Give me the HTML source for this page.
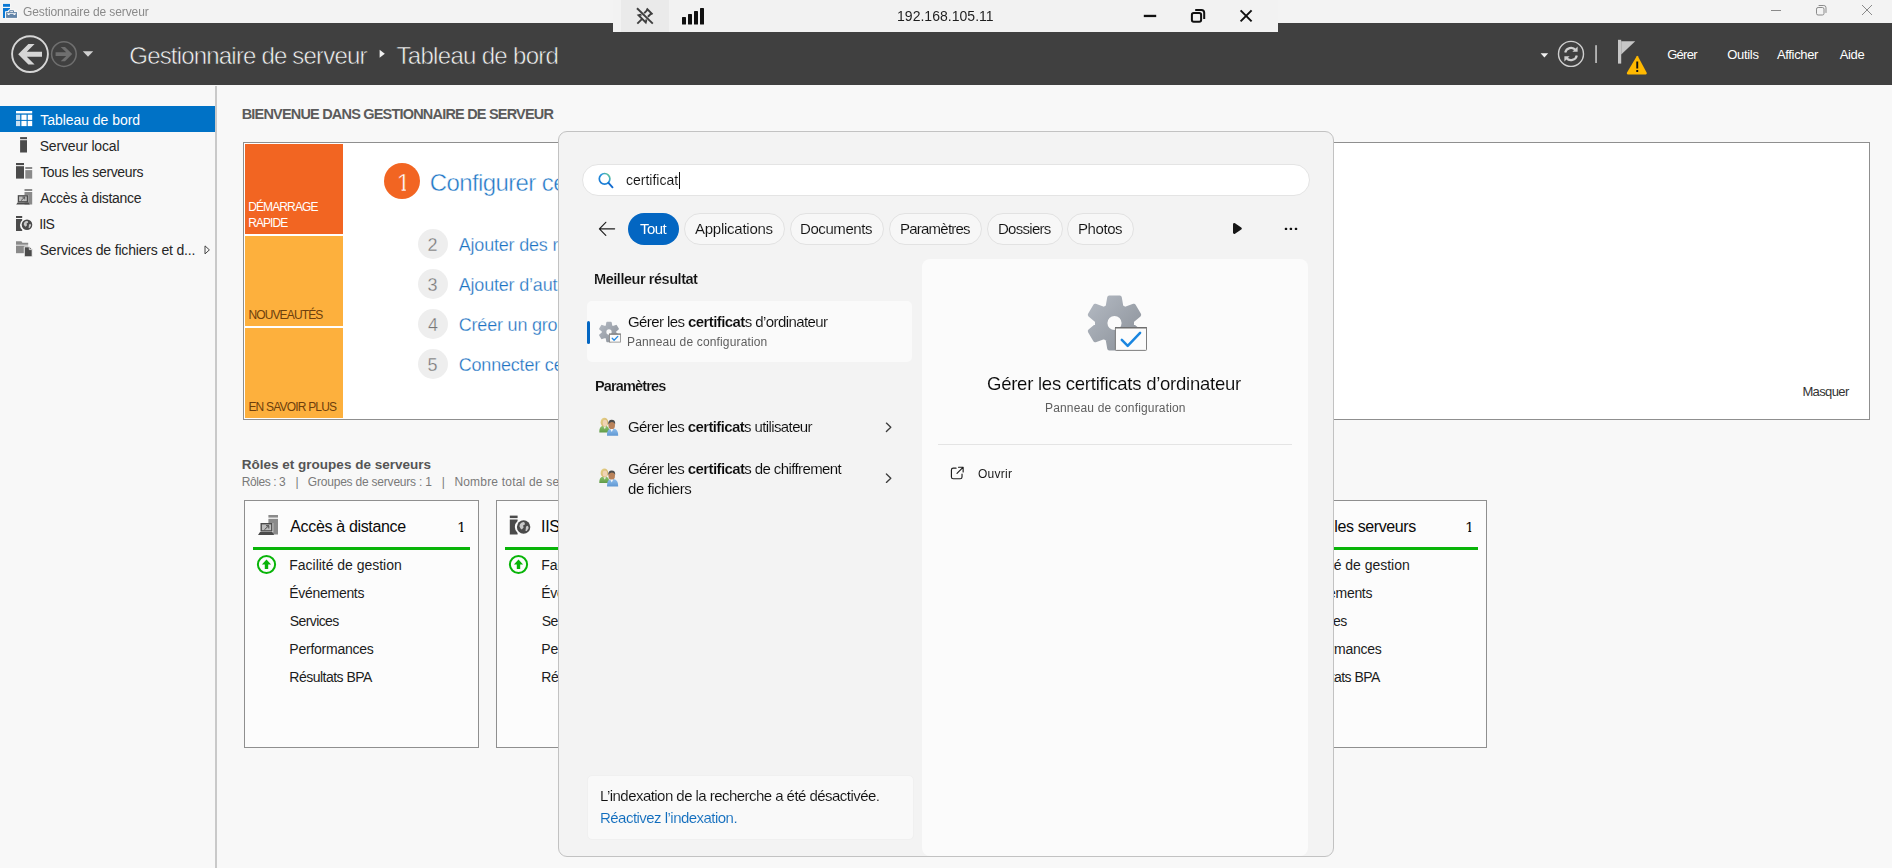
<!DOCTYPE html>
<html lang="fr"><head><meta charset="utf-8"><title>Gestionnaire de serveur</title>
<style>
html,body{margin:0;padding:0;}
body{width:1892px;height:868px;position:relative;overflow:hidden;background:#f8f8f8;font-family:"Liberation Sans",sans-serif;}
.a{position:absolute;}
.t{position:absolute;white-space:nowrap;}
.t b{font-weight:700;-webkit-text-stroke:0.14px #f6f6f6;}
svg{position:absolute;overflow:visible;}
#titlebar{left:0;top:0;width:1892px;height:23px;background:#f3f3f3;}
#header{left:0;top:23px;width:1892px;height:62px;background:#404040;}
#sidebar{left:0;top:85px;width:216px;height:783px;background:#f8f8f8;}
#sideborder{left:215.3px;top:86px;width:1.7px;height:782px;background:#c9c9c9;}
#sel{left:0;top:106px;width:215px;height:26px;background:#0072c6;}
#welcome{left:243px;top:142px;width:1625px;height:276px;background:#fff;border:1px solid #8f8f8f;}
.tile{left:245px;width:98px;height:90px;}
.circ{border-radius:50%;}
.card{top:500px;width:233px;height:246px;background:#fcfcfc;border:1px solid #8f8f8f;}
.gbar{top:547px;width:217px;height:3px;background:#08b408;}
#clipmain{left:217px;top:85px;width:1675px;height:783px;overflow:hidden;}
#rdp{left:613px;top:0;width:665px;height:32px;background:#f2f2f2;z-index:25;}
#panel{left:558px;top:131px;width:774px;height:724px;background:#f3f3f3;border:1px solid #c2c2c2;border-radius:9px;z-index:10;}
.pill{top:213px;height:30px;border:1px solid #e2e2e2;border-radius:16px;background:#f7f7f7;z-index:11;}
.z11{z-index:11;}
</style></head><body>
<div class="a" id="titlebar"></div>
<div class="a" id="header"></div>
<div class="a" id="sidebar"></div>
<div class="a" id="sideborder"></div>
<div class="a" id="sel"></div>

<!-- welcome -->
<div class="a" id="welcome"></div>
<div class="a tile" style="top:144px;background:#f26522"></div>
<div class="a tile" style="top:236px;background:#fdb03d"></div>
<div class="a tile" style="top:328px;background:#fdb03d"></div>
<div class="a circ" style="left:384px;top:163px;width:36px;height:36px;background:#f26522"></div>
<div class="a circ" style="left:418px;top:229px;width:30px;height:30px;background:#eeeeee"></div>
<div class="a circ" style="left:418px;top:269px;width:30px;height:30px;background:#eeeeee"></div>
<div class="a circ" style="left:418px;top:309px;width:30px;height:30px;background:#eeeeee"></div>
<div class="a circ" style="left:418px;top:349px;width:30px;height:30px;background:#eeeeee"></div>

<!-- cards -->
<div class="a card" style="left:244px"></div><div class="a gbar" style="left:253px"></div>
<div class="a card" style="left:496px"></div><div class="a gbar" style="left:505px"></div>
<div class="a card" style="left:748px"></div><div class="a gbar" style="left:757px"></div>
<div class="a card" style="left:1000px"></div><div class="a gbar" style="left:1009px"></div>
<div class="a card" style="left:1252px"></div><div class="a gbar" style="left:1261px"></div>

<!-- title bar icon -->
<svg style="left:0;top:0" width="24" height="23" viewBox="0 0 24 23">
 <rect x="2.4" y="3.3" width="8.2" height="4.2" fill="#fbfbfb"/>
 <rect x="3" y="3.9" width="7" height="2.9" fill="#0a78d4"/>
 <path d="M3 8.1h7v1.1l-3.4 2.5h-1.5v6.4h-2.1z" fill="#0a78d4"/>
 <path d="M5.2 11.2h3.2v-.7q0-1 1-1h4.2q1 0 1 1v.7h3.3v7.5H5.2z" fill="#fbfbfb"/>
 <rect x="6.1" y="12.1" width="10.9" height="5.8" fill="#6485a8"/>
 <path d="M9.7 12.2v-1.5h3.8v1.5" fill="none" stroke="#6485a8" stroke-width="1"/>
 <path d="M6.9 13.3h9.3l-1.2 1.6h-1.2l-.6-.9h-3.3l-.6.9h-1.2z" fill="#fbfbfb"/>
</svg>
<!-- title bar window controls -->
<svg style="left:1760px;top:0" width="132" height="23" viewBox="1760 0 132 23" fill="none" stroke="#8a8a8a" stroke-width="1">
 <path d="M1771 10.5h10"/>
 <rect x="1816.5" y="7.5" width="7.5" height="7.5" rx="1.6"/>
 <path d="M1818.6 5.5h5.2q2.2 0 2.2 2.2v5.2"/>
 <path d="M1862 5l10 10M1872 5l-10 10"/>
</svg>
<!-- header nav buttons -->
<svg style="left:0;top:23px" width="110" height="62" viewBox="0 23 110 62" fill="none">
 <circle cx="30" cy="54.1" r="17.9" stroke="#d6d6d6" stroke-width="1.9"/>
 <path d="M18.2 54.2l10.2-10.2h6.2l-7.8 7.7h15.2v5h-15.2l7.8 7.7h-6.2z" fill="#d6d6d6"/>
 <circle cx="63.9" cy="54.1" r="12.3" stroke="#6f6f6f" stroke-width="1.5"/>
 <path d="M72.2 54.1l-7.2-7.2h-4.3l5.5 5.4h-10.6v3.6h10.6l-5.5 5.4h4.3z" fill="#6f6f6f"/>
 <path d="M82.8 51.2h10.4l-5.2 5.6z" fill="#d0d0d0"/>
</svg>
<!-- breadcrumb triangle -->
<svg style="left:379px;top:49px" width="8" height="10" viewBox="0 0 8 10"><path d="M.6.8l5.2 4-5.2 4z" fill="#f0f0f0"/></svg>
<!-- header right icons -->
<svg style="left:1530px;top:23px" width="130" height="62" viewBox="1530 23 130 62" fill="none">
 <path d="M1540.6 53.2h7.6l-3.8 4.3z" fill="#f0f0f0"/>
 <circle cx="1571" cy="53.9" r="12.5" stroke="#cfcfcf" stroke-width="1.4"/>
 <path d="M1565.2 52.6a6 6 0 0 1 10.4-2.6" stroke="#cfcfcf" stroke-width="2.2"/>
 <path d="M1577.6 46.6v5.2h-5.2z" fill="#cfcfcf"/>
 <path d="M1576.8 55.4a6 6 0 0 1-10.4 2.6" stroke="#cfcfcf" stroke-width="2.2"/>
 <path d="M1564.4 61.4v-5.2h5.2z" fill="#cfcfcf"/>
 <rect x="1595.3" y="45.2" width="1.5" height="17.8" fill="#cfcfcf"/>
 <rect x="1618" y="39.8" width="3.2" height="23.8" fill="#c6c6c6"/>
 <path d="M1621.2 41.2h14l-14 13.4z" fill="#c6c6c6"/>
 <path d="M1636.7 56.2q.6-.9 1.2 0l8.8 16.6q.5 1.6-1 1.6h-17.8q-1.5 0-1-1.6z" fill="#ffb900"/>
 <rect x="1636.3" y="61.5" width="1.9" height="7" fill="#111"/>
 <rect x="1636.3" y="70" width="1.9" height="2" fill="#111"/>
</svg>
<!-- sidebar icons -->
<svg style="left:0;top:100px" width="216" height="170" viewBox="0 100 216 170">
 <!-- dashboard -->
 <rect x="16" y="111" width="16.2" height="2.4" fill="#fff"/>
 <rect x="16" y="114.7" width="4.2" height="5.2" fill="#c9e1f3"/><rect x="21.4" y="114.7" width="5.2" height="5.2" fill="#fff"/><rect x="27.7" y="114.7" width="4.5" height="5.2" fill="#fff"/>
 <rect x="16" y="120.9" width="4.2" height="5.2" fill="#c9e1f3"/><rect x="21.4" y="120.9" width="5.2" height="5.2" fill="#fff"/><rect x="27.7" y="120.9" width="4.5" height="5.2" fill="#fff"/>
 <!-- local server -->
 <rect x="20.1" y="137.1" width="6.9" height="2.1" fill="#4b4b4b"/><rect x="20.1" y="140.2" width="6.9" height="12.3" fill="#4b4b4b"/>
 <!-- all servers -->
 <rect x="16" y="163" width="8" height="2.1" fill="#4b4b4b"/><rect x="16" y="166.2" width="8" height="12.4" fill="#4b4b4b"/>
 <rect x="25.3" y="167" width="6.9" height="2" fill="#8a8a8a"/><rect x="25.3" y="170.1" width="6.9" height="8.5" fill="#8a8a8a"/>
 <!-- remote access -->
 <rect x="24.5" y="189" width="7.7" height="2" fill="#8a8a8a"/><rect x="24.5" y="192" width="7.7" height="12.5" fill="#8a8a8a"/>
 <rect x="17.6" y="195" width="10.6" height="7.4" fill="#f8f8f8"/>
 <rect x="18.4" y="195.8" width="9" height="6" fill="#bdbdbd" stroke="#4b4b4b" stroke-width="1.3"/>
 <path d="M21 200.6l3.6-3.4M22.4 197.1h2.3v2.3" stroke="#4b4b4b" stroke-width=".9" fill="none"/>
 <path d="M16.2 204.5l1.4-2h10.8l1.4 2z" fill="#4b4b4b"/>
 <!-- IIS -->
 <rect x="16" y="216" width="6.2" height="2" fill="#4b4b4b"/><path d="M16 219h6.2v1.2a6.3 6.3 0 0 0 0 9.6v1.2H16z" fill="#4b4b4b"/>
 <circle cx="27" cy="224.8" r="5.3" fill="#4b4b4b"/>
 <path d="M24.2 222.4q1.6-1.8 3.4-1.4l.6 1.6-1.6 1 .4 1.6-1.4 1.6-1-.8-.9-1.8zM29 224.4l1.5-.6.6 1.8-1.5 2.4-1 .1z" fill="#c8c8c8"/>
 <!-- file services -->
 <path d="M16 241.3h5.4l1 1.5h5.8v2H16z" fill="#8a8a8a"/><rect x="16" y="245.6" width="12.2" height="7.6" fill="#8a8a8a"/>
 <path d="M24.3 246.8h5.2l2.7 2.6v7.4h-7.9z" fill="#4b4b4b" stroke="#f8f8f8" stroke-width=".9"/>
 <path d="M29.3 247.2v2.4h2.5" fill="none" stroke="#f8f8f8" stroke-width=".8"/>
 <!-- expander -->
 <path d="M205 245.9l4.4 4-4.4 4z" fill="none" stroke="#444" stroke-width="1"/>
</svg>
<!-- card icons -->
<svg style="left:244px;top:500px" width="1250" height="80" viewBox="244 500 1250 80">
 <!-- remote access 20px -->
 <rect x="268.4" y="515" width="9.6" height="2.6" fill="#8a8a8a"/><rect x="268.4" y="518.8" width="9.6" height="15.7" fill="#8a8a8a"/>
 <rect x="260" y="523" width="13.2" height="9.4" fill="#fcfcfc"/>
 <rect x="261.2" y="523.7" width="10.6" height="7.2" fill="#bdbdbd" stroke="#4b4b4b" stroke-width="1.4"/>
 <path d="M264.4 529.8l4.2-4M266 525.7h2.8v2.8" stroke="#4b4b4b" stroke-width="1" fill="none"/>
 <path d="M258 534.9l2-2.9h12.2l2 2.9z" fill="#4b4b4b"/>
 <!-- IIS 20px -->
 <rect x="509.8" y="515.6" width="7.8" height="2.5" fill="#4b4b4b"/><path d="M509.8 519.4h7.8v1.6a7.9 7.9 0 0 0 0 12v1.6h-7.8z" fill="#4b4b4b"/>
 <circle cx="523.6" cy="527" r="6.7" fill="#4b4b4b"/>
 <path d="M520 524q2-2.3 4.3-1.8l.8 2-2 1.3.5 2-1.8 2-1.3-1-1.1-2.3zM526 526.5l1.9-.8.8 2.3-1.9 3-1.3.1z" fill="#c8c8c8"/>
 <!-- all servers 20px (card 5; hidden mostly) -->
 <rect x="1266" y="515" width="10" height="2.6" fill="#4b4b4b"/><rect x="1266" y="519" width="10" height="15.5" fill="#4b4b4b"/>
 <rect x="1277.6" y="520" width="8.6" height="2.5" fill="#8a8a8a"/><rect x="1277.6" y="523.9" width="8.6" height="10.6" fill="#8a8a8a"/>
 <!-- green status icons -->
 <g fill="none" stroke="#08b408" stroke-width="2">
  <circle cx="266.5" cy="564.5" r="8.6"/><circle cx="518.5" cy="564.5" r="8.6"/><circle cx="770.5" cy="564.5" r="8.6"/><circle cx="1022.5" cy="564.5" r="8.6"/><circle cx="1274.5" cy="564.5" r="8.6"/>
 </g>
 <g fill="#08b408">
  <path d="M266.5 559.4l4.6 5h-2.9v4.6h-3.4v-4.6h-2.9z"/>
  <path d="M518.5 559.4l4.6 5h-2.9v4.6h-3.4v-4.6h-2.9z"/>
  <path d="M770.5 559.4l4.6 5h-2.9v4.6h-3.4v-4.6h-2.9z"/>
  <path d="M1022.5 559.4l4.6 5h-2.9v4.6h-3.4v-4.6h-2.9z"/>
  <path d="M1274.5 559.4l4.6 5h-2.9v4.6h-3.4v-4.6h-2.9z"/>
 </g>
</svg>


<!-- search panel -->
<div class="a" id="panel"></div>
<div class="a z11" style="left:582px;top:164px;width:726px;height:30px;border:1px solid #e4e4e4;border-radius:16px;background:#fff"></div>
<div class="a z11" style="left:628px;top:213px;width:51px;height:32px;border-radius:16px;background:#0366c2"></div>
<div class="a pill" style="left:683.5px;width:99px"></div>
<div class="a pill" style="left:789.5px;width:92px"></div>
<div class="a pill" style="left:888.5px;width:91px"></div>
<div class="a pill" style="left:986.5px;width:74px"></div>
<div class="a pill" style="left:1067px;width:64.5px"></div>
<div class="a z11" style="left:587px;top:301px;width:325px;height:61px;border-radius:5px;background:#fafafa"></div>
<div class="a z11" style="left:587px;top:321px;width:3px;height:23px;border-radius:2px;background:#0366c2"></div>
<div class="a z11" style="left:922px;top:259px;width:386px;height:597px;border-radius:8px 8px 8px 8px;background:#fbfbfb"></div>
<div class="a z11" style="left:937.5px;top:444px;width:354.5px;height:1px;background:#e4e4e4"></div>
<div class="a z11" style="left:587px;top:775px;width:325px;height:63px;border:1px solid #f0f0f0;border-radius:5px;background:#f9f9f9"></div>
<div class="a" style="left:679px;top:172px;width:1px;height:17px;background:#111;z-index:21"></div>
<svg class="z11" style="left:558px;top:131px;z-index:12" width="775" height="725" viewBox="558 131 775 725" fill="none">
 <defs>
  <linearGradient id="gg" x1="0" y1="0" x2="1" y2="1"><stop offset="0" stop-color="#b3b9c2"/><stop offset="1" stop-color="#8a9098"/></linearGradient>
  <linearGradient id="sg" x1="1" y1="0" x2="0" y2="1"><stop offset="0" stop-color="#74d27c"/><stop offset=".4" stop-color="#2a98dc"/><stop offset="1" stop-color="#1672d2"/></linearGradient>
  <g id="gear"><path d="M6.90 -16.19 L5.30 -25.45 L-5.30 -25.45 L-6.90 -16.19 L-10.57 -14.07 L-19.39 -17.32 L-24.69 -8.14 L-17.47 -2.12 L-17.47 2.12 L-24.69 8.14 L-19.39 17.32 L-10.57 14.07 L-6.90 16.19 L-5.30 25.45 L5.30 25.45 L6.90 16.19 L10.57 14.07 L19.39 17.32 L24.69 8.14 L17.47 2.12 L17.47 -2.12 L24.69 -8.14 L19.39 -17.32 L10.57 -14.07Z M9.1 0A9.1 9.1 0 1 0 -9.1 0A9.1 9.1 0 1 0 9.1 0Z" fill="url(#gg)" stroke="url(#gg)" stroke-width="4" stroke-linejoin="round" fill-rule="evenodd"/></g>
 <linearGradient id="ug" x1="0" y1="0" x2="0" y2="1"><stop offset="0" stop-color="#8fc46c"/><stop offset="1" stop-color="#5f9a48"/></linearGradient>
  <linearGradient id="uh" x1="0" y1="0" x2="1" y2="1"><stop offset="0" stop-color="#ead58a"/><stop offset="1" stop-color="#c6a560"/></linearGradient>
  <linearGradient id="ub" x1="0" y1="0" x2="0" y2="1"><stop offset="0" stop-color="#8fbfee"/><stop offset="1" stop-color="#5f97d2"/></linearGradient>
 </defs>
 <!-- search magnifier -->
 <circle cx="604.6" cy="178.8" r="5.3" stroke="url(#sg)" stroke-width="1.7"/>
 <path d="M608.5 182.9l4 4.4" stroke="#146cd0" stroke-width="1.9" stroke-linecap="round"/>
 <!-- back arrow -->
 <path d="M614.6 228.8h-15M605.8 222.3l-6.4 6.5 6.4 6.5" stroke="#1f1f1f" stroke-width="1.2" stroke-linecap="round" stroke-linejoin="round"/>
 <!-- play -->
 <path d="M1234.3 224.4l6.2 4.1-6.2 4.1z" fill="#161616" stroke="#161616" stroke-width="2.6" stroke-linejoin="round"/>
 <!-- ellipsis -->
 <rect x="1284.8" y="227.7" width="2.4" height="2.4" rx=".7" fill="#111"/><rect x="1289.7" y="227.7" width="2.4" height="2.4" rx=".7" fill="#111"/><rect x="1294.8" y="227.7" width="2.4" height="2.4" rx=".7" fill="#111"/>
 <!-- small gear icon -->
 <g transform="translate(609 332) scale(0.371)"><use href="#gear"/></g>
 <rect x="609.5" y="334" width="11" height="8.1" fill="#fcfcfc" stroke="#858585" stroke-width=".8"/>
 <rect x="609.1" y="333.6" width="11.8" height="1.2" fill="#858585"/>
 <path d="M612.2 338.3l1.9 1.9 3.7-3.8" stroke="#2589e2" stroke-width="1.3" stroke-linecap="round" stroke-linejoin="round"/>
 <!-- big gear icon -->
 <g transform="translate(1114.5 323)"><use href="#gear"/></g>
 <rect x="1115.4" y="327.5" width="31.1" height="22.9" rx=".8" fill="#fcfcfc" stroke="#6f6f6f" stroke-width=".9"/>
 <rect x="1115" y="327" width="31.9" height="1.5" fill="#6f6f6f"/>
 <path d="M1121.8 339.8l5.9 6 12.4-13" stroke="#1a86e0" stroke-width="2.5" stroke-linecap="round" stroke-linejoin="round"/>
 <!-- user icons -->
 <g id="usr">
  <path d="M599.3 432.4q-.3-6 3.6-6.6h3q3.6.8 3.4 6.6z" fill="url(#ug)"/>
  <ellipse cx="604.4" cy="422.3" rx="3.8" ry="4.5" fill="url(#uh)"/>
  <ellipse cx="605" cy="423" rx="2.3" ry="3.2" fill="#efd3b4"/>
  <path d="M603.4 426.6l1.4 2.6 1.2-2.6z" fill="#f0f0e6"/>
  <path d="M607 435.8q-.4-6.8 4-7.4h2.6q4.8.6 4.6 7.4z" fill="url(#ub)"/>
  <ellipse cx="611.7" cy="424.9" rx="3.3" ry="4.4" fill="#b9825a"/>
  <path d="M608.3 424.4q-.4-4.6 3.4-4.6q3.8 0 3.5 4.4q-1.2-2.4-3.5-2.3q-2.2 0-3.4 2.5z" fill="#4c4c4c"/>
  <path d="M610.2 429l1.5 3 1.6-3z" fill="#f2f6fa"/>
 </g>
 <use href="#usr" transform="translate(0 50.6)"/>
 <!-- chevrons -->
 <path d="M886.4 423.1l4.4 4.2-4.4 4.2" stroke="#3c3c3c" stroke-width="1.35" stroke-linecap="round" stroke-linejoin="round"/>
 <path d="M886.4 474l4.4 4.2-4.4 4.2" stroke="#3c3c3c" stroke-width="1.35" stroke-linecap="round" stroke-linejoin="round"/>
 <!-- open icon -->
 <g transform="translate(957.1 472.9) scale(0.93) translate(-957.1 -472.9)">
 <path d="M956 467.8h-3q-2 0-2 2v7.4q0 2 2 2h7.4q2 0 2-2v-3" stroke="#1f1f1f" stroke-width="1.25" stroke-linecap="round"/>
 <path d="M958.6 466.8h5v5M963.4 467l-6.4 6.4" stroke="#1f1f1f" stroke-width="1.25" stroke-linecap="round" stroke-linejoin="round"/>
 </g>
</svg>


<!-- rdp bar -->
<div class="a" id="rdp"></div>
<div class="a" style="left:621px;top:0;width:48px;height:32px;background:#eaeaea;z-index:26"></div>
<svg style="left:613px;top:0;z-index:27" width="665" height="32" viewBox="613 0 665 32" fill="none">
 <!-- pin (unpinned) -->
 <g stroke="#3f3f3f" stroke-width="1.9" stroke-linecap="butt" stroke-linejoin="miter" fill="none">
  <g transform="translate(644.4 16.6) rotate(45)">
   <path d="M-4.2 -7.3h8.4M-2.6 -7.3v6l-2.5 4.5h10.2l-2.5 -4.5v-6M0 3.2v6.8"/>
  </g>
  <path d="M637.6 8.8l14.6 14.2" stroke="#eaeaea" stroke-width="2.9"/>
  <path d="M637 8.2l15.8 15.4" stroke-width="1.9"/>
 </g>
 <!-- signal -->
 <g fill="#111"><rect x="682" y="17" width="4" height="7.6" rx=".6"/><rect x="688" y="14" width="4" height="10.6" rx=".6"/><rect x="694" y="11" width="4" height="13.6" rx=".6"/><rect x="700" y="8" width="4" height="16.6" rx=".6"/></g>
 <!-- controls -->
 <rect x="1143.8" y="14.8" width="12.4" height="2.3" fill="#111"/>
 <rect x="1191.9" y="12.9" width="9.2" height="8.9" rx="1.8" stroke="#111" stroke-width="2"/>
 <path d="M1195.2 9.9h6.2q2.8 0 2.8 2.8v6.2" stroke="#111" stroke-width="2"/>
 <path d="M1240.6 10.4l11 11M1251.6 10.4l-11 11" stroke="#111" stroke-width="2"/>
</svg>


<span class="t" style="left:23.47px;top:4px;font-size:12px;line-height:16px;color:#8a8a8a;letter-spacing:-0.105px;will-change:transform;">Gestionnaire de serveur</span>
<span class="t" style="left:129.29px;top:40px;font-size:24px;line-height:31px;color:#f4f4f4;letter-spacing:-0.814px;-webkit-text-stroke:0.55px #404040;">Gestionnaire de serveur</span>
<span class="t" style="left:396.47px;top:40px;font-size:24px;line-height:31px;color:#f4f4f4;letter-spacing:-0.689px;-webkit-text-stroke:0.55px #404040;">Tableau de bord</span>
<span class="t" style="left:1667.25px;top:46px;font-size:13px;line-height:17px;color:#ffffff;letter-spacing:-0.756px;">G&eacute;rer</span>
<span class="t" style="left:1727.18px;top:46px;font-size:13px;line-height:17px;color:#ffffff;letter-spacing:-0.300px;">Outils</span>
<span class="t" style="left:1776.95px;top:46px;font-size:13px;line-height:17px;color:#ffffff;letter-spacing:-0.340px;">Afficher</span>
<span class="t" style="left:1839.85px;top:46px;font-size:13px;line-height:17px;color:#ffffff;letter-spacing:-0.417px;">Aide</span>
<span class="t" style="left:896.91px;top:7px;font-size:14px;line-height:18px;color:#1f1f1f;letter-spacing:0.027px;z-index:30;will-change:transform;">192.168.105.11</span>
<span class="t" style="left:40.21px;top:111px;font-size:14px;line-height:18px;color:#ffffff;letter-spacing:-0.039px;">Tableau de bord</span>
<span class="t" style="left:39.66px;top:137px;font-size:14px;line-height:18px;color:#262626;letter-spacing:-0.145px;">Serveur local</span>
<span class="t" style="left:40.21px;top:163px;font-size:14px;line-height:18px;color:#262626;letter-spacing:-0.350px;">Tous les serveurs</span>
<span class="t" style="left:40.25px;top:189px;font-size:14px;line-height:18px;color:#262626;letter-spacing:-0.302px;">Acc&egrave;s &agrave; distance</span>
<span class="t" style="left:39.21px;top:215px;font-size:14px;line-height:18px;color:#262626;letter-spacing:-0.684px;">IIS</span>
<span class="t" style="left:39.66px;top:241px;font-size:14px;line-height:18px;color:#262626;letter-spacing:-0.168px;">Services de fichiers et d...</span>
<span class="t" style="left:241.63px;top:105px;font-size:14.5px;line-height:19px;color:#5b5b5b;font-weight:700;letter-spacing:-0.807px;">BIENVENUE DANS GESTIONNAIRE DE SERVEUR</span>
<span class="t" style="left:248.13px;top:199px;font-size:12px;line-height:16px;color:#ffffff;letter-spacing:-0.874px;">D&Eacute;MARRAGE</span>
<span class="t" style="left:248.13px;top:215px;font-size:12px;line-height:16px;color:#ffffff;letter-spacing:-0.899px;">RAPIDE</span>
<span class="t" style="left:248.38px;top:307px;font-size:12px;line-height:16px;color:#6e3f0c;letter-spacing:-0.856px;">NOUVEAUT&Eacute;S</span>
<span class="t" style="left:248.38px;top:399px;font-size:12px;line-height:16px;color:#6e3f0c;letter-spacing:-0.800px;">EN SAVOIR PLUS</span>
<span class="t" style="left:396.63px;top:167px;font-size:24px;line-height:31px;color:#ffffff;-webkit-text-stroke:0.5px #f26522;clip-path:polygon(0 0,100% 0,100% 22px,9.1px 22px,9.1px 100%,5px 100%,5px 22px,0 22px);">1</span>
<span class="t" style="left:429.78px;top:167px;font-size:24px;line-height:31px;color:#2277c6;letter-spacing:-0.613px;-webkit-text-stroke:0.45px #ffffff;">Configurer ce serveur local</span>
<span class="t" style="left:427.59px;top:234px;font-size:18px;line-height:23px;color:#767676;letter-spacing:0.438px;-webkit-text-stroke:0.3px #eeeeee;">2</span>
<span class="t" style="left:427.59px;top:274px;font-size:18px;line-height:23px;color:#767676;letter-spacing:0.368px;-webkit-text-stroke:0.3px #eeeeee;">3</span>
<span class="t" style="left:428.01px;top:314px;font-size:18px;line-height:23px;color:#767676;letter-spacing:-0.355px;-webkit-text-stroke:0.3px #eeeeee;">4</span>
<span class="t" style="left:427.59px;top:354px;font-size:18px;line-height:23px;color:#767676;letter-spacing:0.342px;-webkit-text-stroke:0.3px #eeeeee;">5</span>
<span class="t" style="left:458.76px;top:234px;font-size:18px;line-height:23px;color:#1c72c2;letter-spacing:-0.197px;-webkit-text-stroke:0.28px #ffffff;">Ajouter des r&ocirc;les et des fonctionnalit&eacute;s</span>
<span class="t" style="left:458.76px;top:274px;font-size:18px;line-height:23px;color:#1c72c2;letter-spacing:-0.197px;-webkit-text-stroke:0.28px #ffffff;">Ajouter d&rsquo;autres serveurs &agrave; g&eacute;rer</span>
<span class="t" style="left:458.76px;top:314px;font-size:18px;line-height:23px;color:#1c72c2;letter-spacing:-0.197px;-webkit-text-stroke:0.28px #ffffff;">Cr&eacute;er un groupe de serveurs</span>
<span class="t" style="left:458.76px;top:354px;font-size:18px;line-height:23px;color:#1c72c2;letter-spacing:-0.197px;-webkit-text-stroke:0.28px #ffffff;">Connecter ce serveur aux services cloud</span>
<span class="t" style="left:1802.41px;top:383px;font-size:13px;line-height:17px;color:#333333;letter-spacing:-0.616px;">Masquer</span>
<span class="t" style="left:241.69px;top:456px;font-size:13.5px;line-height:18px;color:#555555;font-weight:700;letter-spacing:0.012px;">R&ocirc;les et groupes de serveurs</span>
<span class="t" style="left:241.63px;top:474px;font-size:12px;line-height:16px;color:#7a7a7a;letter-spacing:-0.405px;">R&ocirc;les : 3</span>
<span class="t" style="left:295.38px;top:474px;font-size:12px;line-height:16px;color:#7a7a7a;">|</span>
<span class="t" style="left:441.68px;top:474px;font-size:12px;line-height:16px;color:#7a7a7a;">|</span>
<span class="t" style="left:307.87px;top:474px;font-size:12px;line-height:16px;color:#7a7a7a;letter-spacing:-0.211px;">Groupes de serveurs : 1</span>
<span class="t" style="left:454.38px;top:474px;font-size:12px;line-height:16px;color:#7a7a7a;letter-spacing:0.197px;">Nombre total de serveurs : 1</span>
<span class="t" style="left:290.29px;top:516px;font-size:16px;line-height:21px;color:#0a0a0a;letter-spacing:-0.341px;">Acc&egrave;s &agrave; distance</span>
<span class="t" style="left:457.37px;top:517px;font-size:15px;line-height:20px;color:#0a0a0a;clip-path:polygon(0 0,100% 0,100% 13.7px,5.9px 13.7px,5.9px 100%,3px 100%,3px 13.7px,0 13.7px);">1</span>
<span class="t" style="left:289.34px;top:556px;font-size:14px;line-height:18px;color:#1c1c1c;letter-spacing:-0.026px;">Facilit&eacute; de gestion</span>
<span class="t" style="left:289.34px;top:584px;font-size:14px;line-height:18px;color:#1c1c1c;letter-spacing:-0.299px;">&Eacute;v&eacute;nements</span>
<span class="t" style="left:289.66px;top:612px;font-size:14px;line-height:18px;color:#1c1c1c;letter-spacing:-0.573px;">Services</span>
<span class="t" style="left:289.34px;top:640px;font-size:14px;line-height:18px;color:#1c1c1c;letter-spacing:-0.242px;">Performances</span>
<span class="t" style="left:289.34px;top:668px;font-size:14px;line-height:18px;color:#1c1c1c;letter-spacing:-0.510px;">R&eacute;sultats BPA</span>
<span class="t" style="left:541.05px;top:516px;font-size:16px;line-height:21px;color:#0a0a0a;letter-spacing:-0.353px;">IIS</span>
<span class="t" style="left:709.37px;top:517px;font-size:15px;line-height:20px;color:#0a0a0a;clip-path:polygon(0 0,100% 0,100% 13.7px,5.9px 13.7px,5.9px 100%,3px 100%,3px 13.7px,0 13.7px);">1</span>
<span class="t" style="left:541.34px;top:556px;font-size:14px;line-height:18px;color:#1c1c1c;letter-spacing:-0.026px;">Facilit&eacute; de gestion</span>
<span class="t" style="left:541.34px;top:584px;font-size:14px;line-height:18px;color:#1c1c1c;letter-spacing:-0.299px;">&Eacute;v&eacute;nements</span>
<span class="t" style="left:541.66px;top:612px;font-size:14px;line-height:18px;color:#1c1c1c;letter-spacing:-0.573px;">Services</span>
<span class="t" style="left:541.34px;top:640px;font-size:14px;line-height:18px;color:#1c1c1c;letter-spacing:-0.242px;">Performances</span>
<span class="t" style="left:541.34px;top:668px;font-size:14px;line-height:18px;color:#1c1c1c;letter-spacing:-0.510px;">R&eacute;sultats BPA</span>
<span class="t" style="left:793.67px;top:516px;font-size:16px;line-height:21px;color:#0a0a0a;letter-spacing:-0.409px;">Services de fichiers et d...</span>
<span class="t" style="left:961.37px;top:517px;font-size:15px;line-height:20px;color:#0a0a0a;clip-path:polygon(0 0,100% 0,100% 13.7px,5.9px 13.7px,5.9px 100%,3px 100%,3px 13.7px,0 13.7px);">1</span>
<span class="t" style="left:793.34px;top:556px;font-size:14px;line-height:18px;color:#1c1c1c;letter-spacing:-0.026px;">Facilit&eacute; de gestion</span>
<span class="t" style="left:793.34px;top:584px;font-size:14px;line-height:18px;color:#1c1c1c;letter-spacing:-0.299px;">&Eacute;v&eacute;nements</span>
<span class="t" style="left:793.66px;top:612px;font-size:14px;line-height:18px;color:#1c1c1c;letter-spacing:-0.573px;">Services</span>
<span class="t" style="left:793.34px;top:640px;font-size:14px;line-height:18px;color:#1c1c1c;letter-spacing:-0.242px;">Performances</span>
<span class="t" style="left:793.34px;top:668px;font-size:14px;line-height:18px;color:#1c1c1c;letter-spacing:-0.510px;">R&eacute;sultats BPA</span>
<span class="t" style="left:1045.67px;top:516px;font-size:16px;line-height:21px;color:#0a0a0a;letter-spacing:0.039px;">Serveur local</span>
<span class="t" style="left:1213.37px;top:517px;font-size:15px;line-height:20px;color:#0a0a0a;clip-path:polygon(0 0,100% 0,100% 13.7px,5.9px 13.7px,5.9px 100%,3px 100%,3px 13.7px,0 13.7px);">1</span>
<span class="t" style="left:1045.34px;top:556px;font-size:14px;line-height:18px;color:#1c1c1c;letter-spacing:-0.026px;">Facilit&eacute; de gestion</span>
<span class="t" style="left:1045.34px;top:584px;font-size:14px;line-height:18px;color:#1c1c1c;letter-spacing:-0.299px;">&Eacute;v&eacute;nements</span>
<span class="t" style="left:1045.66px;top:612px;font-size:14px;line-height:18px;color:#1c1c1c;letter-spacing:-0.573px;">Services</span>
<span class="t" style="left:1045.34px;top:640px;font-size:14px;line-height:18px;color:#1c1c1c;letter-spacing:-0.242px;">Performances</span>
<span class="t" style="left:1045.34px;top:668px;font-size:14px;line-height:18px;color:#1c1c1c;letter-spacing:-0.510px;">R&eacute;sultats BPA</span>
<span class="t" style="left:1298.16px;top:516px;font-size:16px;line-height:21px;color:#0a0a0a;letter-spacing:-0.405px;">Tous les serveurs</span>
<span class="t" style="left:1465.37px;top:517px;font-size:15px;line-height:20px;color:#0a0a0a;clip-path:polygon(0 0,100% 0,100% 13.7px,5.9px 13.7px,5.9px 100%,3px 100%,3px 13.7px,0 13.7px);">1</span>
<span class="t" style="left:1297.34px;top:556px;font-size:14px;line-height:18px;color:#1c1c1c;letter-spacing:-0.026px;">Facilit&eacute; de gestion</span>
<span class="t" style="left:1297.34px;top:584px;font-size:14px;line-height:18px;color:#1c1c1c;letter-spacing:-0.299px;">&Eacute;v&eacute;nements</span>
<span class="t" style="left:1297.66px;top:612px;font-size:14px;line-height:18px;color:#1c1c1c;letter-spacing:-0.573px;">Services</span>
<span class="t" style="left:1297.34px;top:640px;font-size:14px;line-height:18px;color:#1c1c1c;letter-spacing:-0.242px;">Performances</span>
<span class="t" style="left:1297.34px;top:668px;font-size:14px;line-height:18px;color:#1c1c1c;letter-spacing:-0.510px;">R&eacute;sultats BPA</span>
<span class="t" style="left:625.87px;top:171px;font-size:14px;line-height:18px;color:#101010;letter-spacing:-0.004px;z-index:20;will-change:transform;-webkit-text-stroke:0.1px #f4f4f4;">certificat</span>
<span class="t" style="left:640.18px;top:219px;font-size:15px;line-height:20px;color:#ffffff;letter-spacing:-0.524px;z-index:20;will-change:transform;">Tout</span>
<span class="t" style="left:695.26px;top:219px;font-size:15px;line-height:20px;color:#101010;letter-spacing:-0.256px;z-index:20;will-change:transform;-webkit-text-stroke:0.1px #f4f4f4;">Applications</span>
<span class="t" style="left:800.03px;top:219px;font-size:15px;line-height:20px;color:#101010;letter-spacing:-0.420px;z-index:20;will-change:transform;-webkit-text-stroke:0.1px #f4f4f4;">Documents</span>
<span class="t" style="left:899.78px;top:219px;font-size:15px;line-height:20px;color:#101010;letter-spacing:-0.771px;z-index:20;will-change:transform;-webkit-text-stroke:0.1px #f4f4f4;">Param&egrave;tres</span>
<span class="t" style="left:997.78px;top:219px;font-size:15px;line-height:20px;color:#101010;letter-spacing:-0.723px;z-index:20;will-change:transform;-webkit-text-stroke:0.1px #f4f4f4;">Dossiers</span>
<span class="t" style="left:1077.78px;top:219px;font-size:15px;line-height:20px;color:#101010;letter-spacing:-0.421px;z-index:20;will-change:transform;-webkit-text-stroke:0.1px #f4f4f4;">Photos</span>
<span class="t" style="left:593.63px;top:270px;font-size:14.5px;line-height:19px;color:#111111;font-weight:700;letter-spacing:-0.453px;z-index:20;will-change:transform;-webkit-text-stroke:0.14px #f3f3f3;">Meilleur r&eacute;sultat</span>
<span class="t" style="left:627.51px;top:312px;font-size:15px;line-height:20px;color:#0a0a0a;letter-spacing:-0.581px;z-index:20;will-change:transform;-webkit-text-stroke:0.1px #f4f4f4;">G&eacute;rer les <b>certificat</b>s d&rsquo;ordinateur</span>
<span class="t" style="left:627.38px;top:334px;font-size:12px;line-height:16px;color:#5e5e5e;letter-spacing:0.152px;z-index:20;will-change:transform;">Panneau de configuration</span>
<span class="t" style="left:594.63px;top:377px;font-size:14.5px;line-height:19px;color:#111111;font-weight:700;letter-spacing:-0.856px;z-index:20;will-change:transform;-webkit-text-stroke:0.14px #f3f3f3;">Param&egrave;tres</span>
<span class="t" style="left:627.51px;top:417px;font-size:15px;line-height:20px;color:#0a0a0a;letter-spacing:-0.615px;z-index:20;will-change:transform;-webkit-text-stroke:0.1px #f4f4f4;">G&eacute;rer les <b>certificat</b>s utilisateur</span>
<span class="t" style="left:627.51px;top:459px;font-size:15px;line-height:20px;color:#0a0a0a;letter-spacing:-0.603px;z-index:20;will-change:transform;-webkit-text-stroke:0.1px #f4f4f4;">G&eacute;rer les <b>certificat</b>s de chiffrement</span>
<span class="t" style="left:627.60px;top:479px;font-size:15px;line-height:20px;color:#0a0a0a;letter-spacing:-0.464px;z-index:20;will-change:transform;-webkit-text-stroke:0.1px #f4f4f4;">de fichiers</span>
<span class="t" style="left:987.39px;top:372px;font-size:18.5px;line-height:24px;color:#080808;letter-spacing:-0.243px;z-index:20;will-change:transform;-webkit-text-stroke:0.1px #f4f4f4;">G&eacute;rer les certificats d&rsquo;ordinateur</span>
<span class="t" style="left:1044.63px;top:400px;font-size:12px;line-height:16px;color:#5e5e5e;letter-spacing:0.163px;z-index:20;will-change:transform;">Panneau de configuration</span>
<span class="t" style="left:977.69px;top:466px;font-size:12px;line-height:16px;color:#1a1a1a;letter-spacing:0.279px;z-index:20;will-change:transform;">Ouvrir</span>
<span class="t" style="left:600.03px;top:786px;font-size:15px;line-height:20px;color:#101010;letter-spacing:-0.544px;z-index:20;will-change:transform;-webkit-text-stroke:0.1px #f4f4f4;">L&rsquo;indexation de la recherche a &eacute;t&eacute; d&eacute;sactiv&eacute;e.</span>
<span class="t" style="left:600.03px;top:808px;font-size:15px;line-height:20px;color:#0f6cbd;letter-spacing:-0.530px;z-index:20;will-change:transform;-webkit-text-stroke:0.1px #f4f4f4;">R&eacute;activez l&rsquo;indexation.</span>
</body></html>
